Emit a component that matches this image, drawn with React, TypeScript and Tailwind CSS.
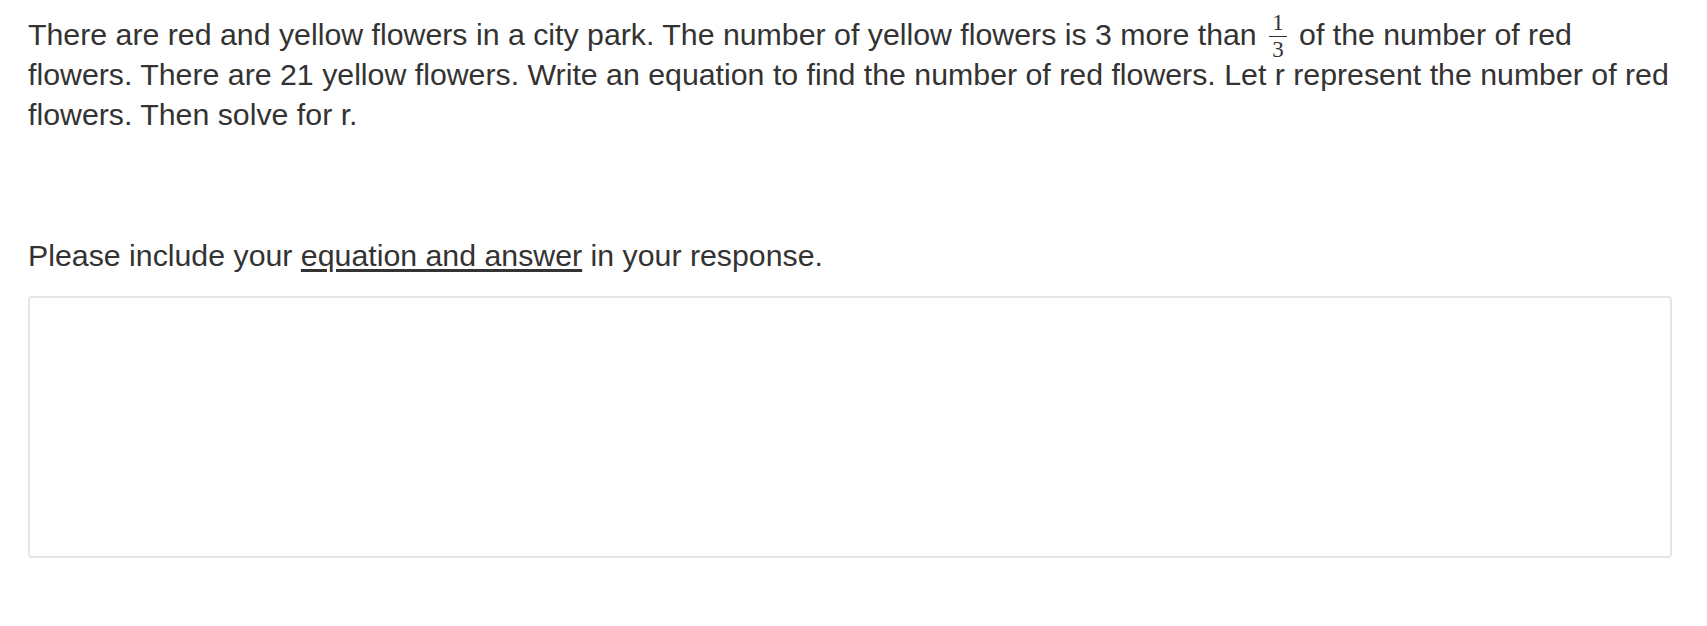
export default function App() {
  return (
    <main className="min-h-screen bg-white px-[28px] pt-[15px] font-['Liberation_Sans',Arial,sans-serif] text-[30.3px] leading-[40px] text-[#333333]">
      <p className="w-[1644px] whitespace-nowrap">
        There are red and yellow flowers in a city park. The number of yellow flowers is 3 more than{" "}
        <span className="mx-[4px] -my-3 inline-flex flex-col items-center align-[15px] font-['Liberation_Serif',serif] text-[23px] leading-[18px]">
          <span className="h-[18px] px-[3px]">1</span>
          <span className="mt-[4px] h-px w-full bg-[#333333]" />
          <span className="mt-[4px] h-[18px] px-[3px]">3</span>
        </span>{" "}
        of the number of red
        <br />
        flowers. There are 21 yellow flowers. Write an equation to find the number of red flowers. Let r represent the
        number of red
        <br />
        flowers. Then solve for r.
      </p>

      <p className="mt-[101px]">
        Please include your <span className="underline underline-offset-[3px]">equation and answer</span> in your
        response.
      </p>

      <textarea
        className="mt-[20px] block h-[262px] w-[1644px] resize-none rounded-[4px] border-2 border-[#e6e6e6] bg-white p-3 outline-none"
        aria-label="response"
      />
    </main>
  );
}
